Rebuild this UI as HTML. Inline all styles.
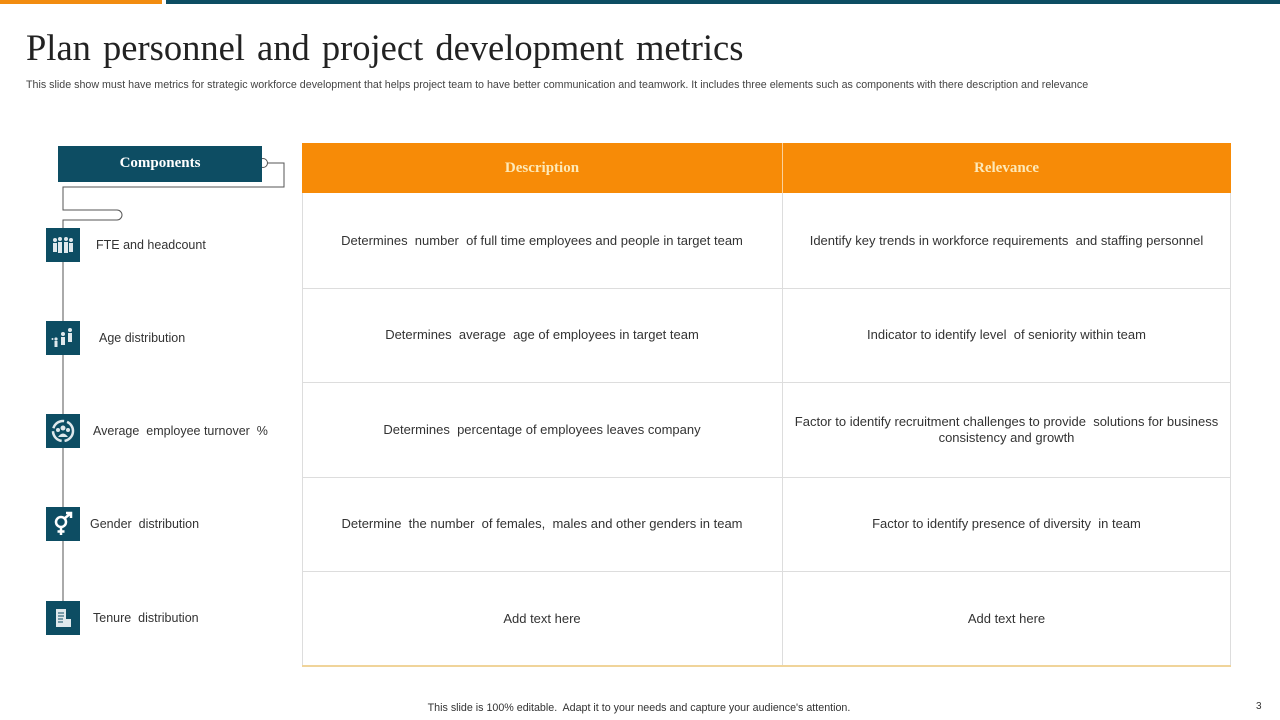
<!DOCTYPE html>
<html><head><meta charset="utf-8"><style>
*{margin:0;padding:0;box-sizing:border-box}
body{width:1280px;height:720px;position:relative;background:#fff;font-family:"Liberation Sans",sans-serif;color:#333;overflow:hidden}
.a{position:absolute}
.t{font-family:"Liberation Serif",serif;font-size:36.5px;color:#222;left:26px;top:26px;word-spacing:3px;white-space:nowrap}
.sub{left:26px;top:79px;font-size:10.7px;color:#444;white-space:nowrap}
.cell{position:absolute;display:flex;align-items:center;justify-content:center;text-align:center;font-size:13px;color:#333;line-height:16px;padding:0 8px}
.hl{position:absolute;height:1px;background:#ddd;left:302px;width:929px}
.ic{position:absolute;left:46px;width:34px;height:34px;background:#0d4d63;display:flex;align-items:center;justify-content:center}
.lb{position:absolute;font-size:12.5px;color:#333;white-space:nowrap}
</style></head><body>
<div class="a" style="left:0;top:0;width:162px;height:4px;background:#f28c0f"></div>
<div class="a" style="left:166px;top:0;width:1114px;height:4px;background:#0d4d63"></div>
<div class="a t">Plan personnel and project development metrics</div>
<div class="a sub">This slide show must have metrics for strategic workforce development that helps project team to have better communication and teamwork. It includes three elements such as components with there description and relevance</div>

<svg class="a" style="left:0;top:140px" width="300" height="520">
<path d="M262 23 H284 V47 H63 V70 H117 A5 5 0 0 1 117 80 H63 V480" fill="none" stroke="#555" stroke-width="1"/>
<circle cx="263" cy="23" r="4.5" fill="#fff" stroke="#555"/>
</svg>
<div class="a" style="left:58px;top:146px;width:204px;height:36px;background:#0d4d63;color:#fff;font-family:'Liberation Serif',serif;font-weight:bold;font-size:15px;display:flex;align-items:center;justify-content:center;padding-bottom:1px">Components</div>

<div class="ic" style="top:228px"><svg width="24" height="20" viewBox="0 0 24 20" fill="#dfe8ec"><circle cx="4" cy="5" r="2"/><circle cx="9" cy="4" r="2"/><circle cx="15" cy="4" r="2"/><circle cx="20" cy="5" r="2"/><rect x="2" y="8" width="4" height="9"/><rect x="7" y="7" width="4" height="11"/><rect x="13" y="7" width="4" height="11"/><rect x="18" y="8" width="4" height="9"/></svg></div>
<div class="lb" style="left:96px;top:238px">FTE and headcount</div>
<div class="ic" style="top:321px"><svg width="24" height="22" viewBox="0 0 24 22" fill="#dfe8ec"><circle cx="19" cy="3" r="2"/><rect x="17" y="6" width="4" height="9"/><circle cx="12" cy="7" r="2"/><rect x="10" y="10" width="4" height="8"/><circle cx="5" cy="12" r="1.6"/><rect x="3.5" y="14" width="3" height="6"/><circle cx="1.5" cy="12" r="1"/></svg></div>
<div class="lb" style="left:99px;top:331px">Age distribution</div>
<div class="ic" style="top:414px"><svg width="26" height="26" viewBox="0 0 26 26"><circle cx="13" cy="13" r="10" fill="none" stroke="#dfe8ec" stroke-width="2.5" stroke-dasharray="14 3"/><circle cx="13" cy="10" r="2.5" fill="#dfe8ec"/><circle cx="8" cy="12" r="2" fill="#dfe8ec"/><circle cx="18" cy="12" r="2" fill="#dfe8ec"/><path d="M8 19 Q13 12 18 19Z" fill="#dfe8ec"/></svg></div>
<div class="lb" style="left:93px;top:424px">Average&nbsp; employee turnover&nbsp; %</div>
<div class="ic" style="top:507px"><svg width="22" height="26" viewBox="0 0 22 26" fill="none" stroke="#fff" stroke-width="2.5"><circle cx="9" cy="11" r="5"/><path d="M12.5 7.5 L19 2 M14 2 H19 V7 M9 16 V24 M5.5 20.5 H12.5"/></svg></div>
<div class="lb" style="left:90px;top:517px">Gender&nbsp; distribution</div>
<div class="ic" style="top:601px"><svg width="20" height="22" viewBox="0 0 20 22" fill="#dfe8ec"><rect x="3" y="2" width="10" height="18"/><rect x="12" y="12" width="6" height="8"/><path d="M5 6h6M5 9h6M5 12h5M5 15h5" stroke="#0d4d63" stroke-width="1"/></svg></div>
<div class="lb" style="left:93px;top:611px">Tenure&nbsp; distribution</div>

<div class="a" style="left:302px;top:143px;width:929px;height:50px;background:#f78b07"></div>
<div class="a" style="left:782px;top:143px;width:1px;height:50px;background:#fbd19b"></div>
<div class="cell" style="left:302px;top:143px;width:480px;height:50px;color:#fde9b8;font-family:'Liberation Serif',serif;font-weight:bold;font-size:15px">Description</div>
<div class="cell" style="left:782px;top:143px;width:449px;height:50px;color:#fde9b8;font-family:'Liberation Serif',serif;font-weight:bold;font-size:15px">Relevance</div>
<div class="a" style="left:302px;top:193px;width:1px;height:473px;background:#ddd"></div>
<div class="a" style="left:1230px;top:193px;width:1px;height:473px;background:#ddd"></div>
<div class="a" style="left:782px;top:193px;width:1px;height:473px;background:#ddd"></div>
<div class="hl" style="top:288px"></div><div class="hl" style="top:382px"></div><div class="hl" style="top:477px"></div><div class="hl" style="top:571px"></div>
<div class="a" style="left:302px;top:665px;width:929px;height:2px;background:#f0d49a"></div>

<div class="cell" style="left:302px;top:193px;width:480px;height:95px">Determines&nbsp; number&nbsp; of full time employees and people in target team</div>
<div class="cell" style="left:782px;top:193px;width:449px;height:95px">Identify key trends in workforce requirements&nbsp; and staffing personnel</div>
<div class="cell" style="left:302px;top:288px;width:480px;height:94px">Determines&nbsp; average&nbsp; age of employees in target team</div>
<div class="cell" style="left:782px;top:288px;width:449px;height:94px">Indicator to identify level&nbsp; of seniority within team</div>
<div class="cell" style="left:302px;top:382px;width:480px;height:95px">Determines&nbsp; percentage of employees leaves company</div>
<div class="cell" style="left:782px;top:382px;width:449px;height:95px">Factor to identify recruitment challenges to provide&nbsp; solutions for business consistency and growth</div>
<div class="cell" style="left:302px;top:477px;width:480px;height:94px">Determine&nbsp; the number&nbsp; of females,&nbsp; males and other genders in team</div>
<div class="cell" style="left:782px;top:477px;width:449px;height:94px">Factor to identify presence of diversity&nbsp; in team</div>
<div class="cell" style="left:302px;top:571px;width:480px;height:95px">Add text here</div>
<div class="cell" style="left:782px;top:571px;width:449px;height:95px">Add text here</div>

<div class="a" style="left:0;width:1280px;top:702px;text-align:center;font-size:10.7px;color:#333;padding-right:2px">This slide is 100% editable.&nbsp; Adapt it to your needs and capture your audience's attention.</div>
<div class="a" style="left:1256px;top:701px;font-size:10px;color:#333">3</div>
</body></html>
